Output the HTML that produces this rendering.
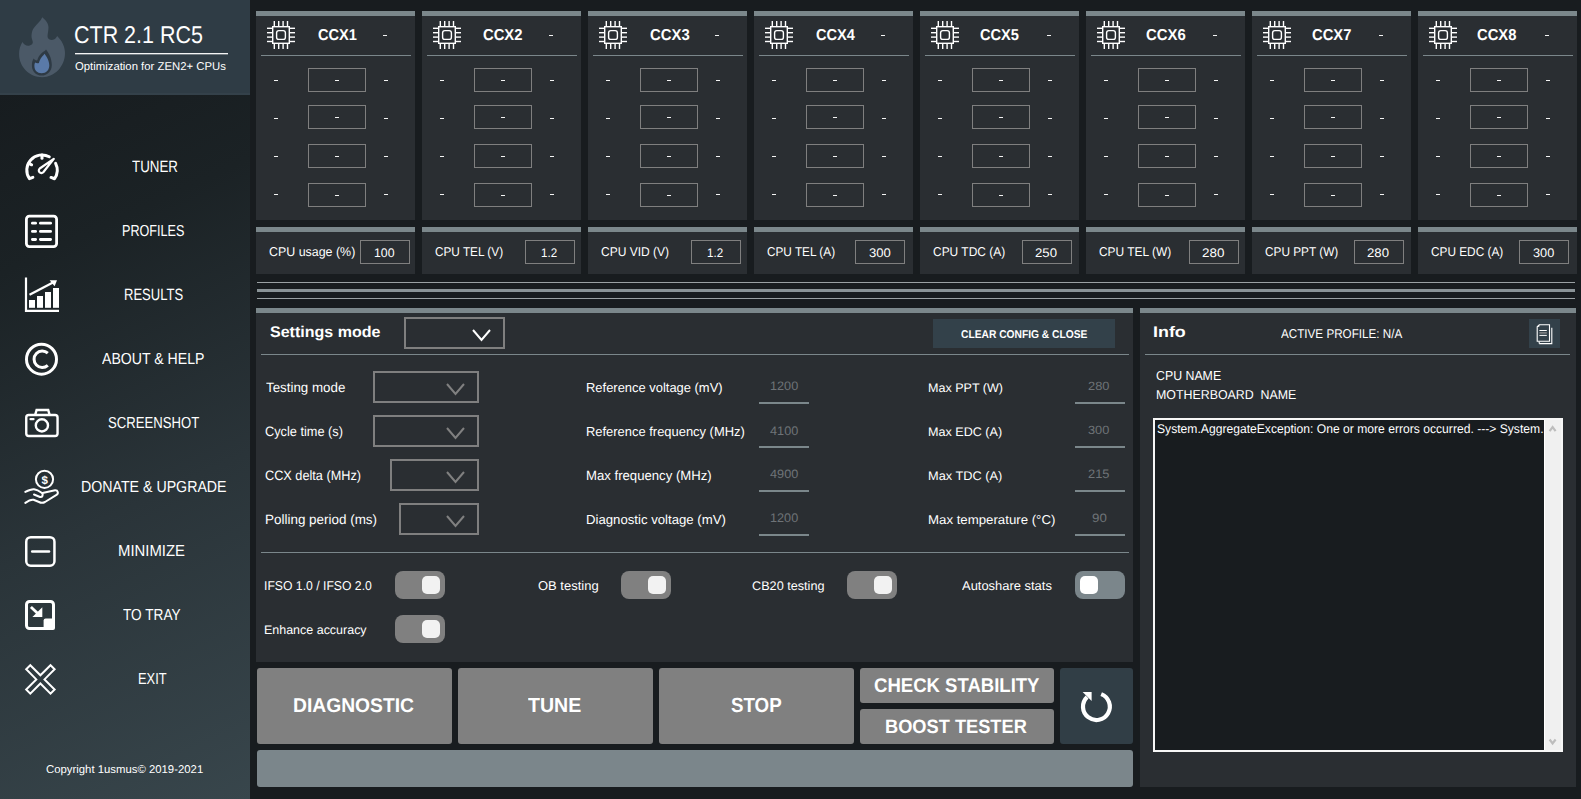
<!DOCTYPE html><html><head><meta charset="utf-8"><style>
*{margin:0;padding:0;box-sizing:border-box}
html,body{width:1581px;height:799px;overflow:hidden;background:#181c1f;font-family:"Liberation Sans",sans-serif;color:#fff;text-rendering:geometricPrecision}
.a{position:absolute}
.t{position:absolute;white-space:nowrap;line-height:1;transform-origin:0 0}
.pnl{position:absolute;background:#2a2e32}
.bar{position:absolute;background:#7b878b}
.box{position:absolute;border:1px solid #7f7f7f}
.dd{position:absolute;border:2px solid #7f7f7f}
.sep{position:absolute;height:1px;background:#7b878b}
.dash{position:absolute;width:4px;height:1px;background:#f4f4f4}
.ul{position:absolute;width:50px;height:2px;background:#7b878b}
.tog{position:absolute;width:50px;height:28px;border-radius:8px;background:#808080}
.knob{position:absolute;width:18px;height:18px;border-radius:5px;background:#f2f2f2}
.btn{position:absolute;background:#808080;border-radius:3px}
svg{position:absolute;overflow:visible}
</style></head><body>
<div class="a" style="left:0;top:0;width:250px;height:799px;background:linear-gradient(155deg,#15191c 0%,#1b2225 30%,#2a3439 62%,#38464c 100%)"></div>
<div class="a" style="left:0px;top:0px;width:250px;height:95px;background:#2f3c45;"></div>
<div class="a" style="left:0px;top:93px;width:250px;height:2px;background:#34414a;"></div>
<div class="t" style="left:73.93px;top:23.62px;font-size:24.20px;font-weight:400;color:#fff;transform:scaleX(0.8879)">CTR 2.1 RC5</div>
<div class="t" style="left:75.13px;top:61.53px;font-size:11.30px;font-weight:400;color:#fff;transform:scaleX(1.0030)">Optimization for ZEN2+ CPUs</div>
<div class="a" style="left:75px;top:53px;width:153px;height:1px;background:#f4f4f4;"></div>
<div class="a" style="left:75px;top:54px;width:153px;height:1px;background:rgba(240,240,240,0.35);"></div>
<div class="t" style="left:131.63px;top:158.57px;font-size:16.38px;font-weight:400;color:#fff;transform:scaleX(0.8148)">TUNER</div>
<div class="t" style="left:121.79px;top:223.57px;font-size:15.94px;font-weight:400;color:#fff;transform:scaleX(0.7912)">PROFILES</div>
<div class="t" style="left:124.36px;top:286.57px;font-size:16.38px;font-weight:400;color:#fff;transform:scaleX(0.7962)">RESULTS</div>
<div class="t" style="left:102.30px;top:351.57px;font-size:15.94px;font-weight:400;color:#fff;transform:scaleX(0.8848)">ABOUT &amp; HELP</div>
<div class="t" style="left:107.84px;top:415.62px;font-size:15.94px;font-weight:400;color:#fff;transform:scaleX(0.8236)">SCREENSHOT</div>
<div class="t" style="left:80.76px;top:479.57px;font-size:15.94px;font-weight:400;color:#fff;transform:scaleX(0.8902)">DONATE &amp; UPGRADE</div>
<div class="t" style="left:118.21px;top:543.57px;font-size:15.94px;font-weight:400;color:#fff;transform:scaleX(0.9337)">MINIMIZE</div>
<div class="t" style="left:123.33px;top:607.57px;font-size:15.94px;font-weight:400;color:#fff;transform:scaleX(0.8554)">TO TRAY</div>
<div class="t" style="left:137.67px;top:671.57px;font-size:15.94px;font-weight:400;color:#fff;transform:scaleX(0.8078)">EXIT</div>
<div class="t" style="left:46.13px;top:764.55px;font-size:11.30px;font-weight:400;color:#fff;transform:scaleX(1.0042)">Copyright 1usmus&copy; 2019-2021</div>
<svg style="left:0;top:0" width="250" height="799" viewBox="0 0 250 799"><path d="M42.3,17.3 C45,19.5 48.5,23 48.5,27.5 C48.5,31 47.3,34.5 47.6,37.1 C48,39.5 51.5,40.8 53.8,39.6 C55.5,38.7 56.5,37.2 57.1,35.9 C61.5,40 65,46 65,53 C65,66.5 54.5,77.2 42.3,77.2 C29.5,77.2 19.1,67 19.1,54 C19.1,49.5 20.3,45.5 22.4,42.1 C23.2,44 26,46.2 29,45.8 C32,45.2 33,43.5 32.8,42.1 C32.5,40 31.3,38 31.5,35.5 C31.7,32 32.5,29.8 34,27.7 C36.5,24.5 40.5,21.5 42.3,17.3 Z" fill="#4b5967"/><path d="M46,49.5 C48.5,52.5 51.8,58 51.8,65 C51.8,71 47.5,75.6 41.6,75.6 C36,75.6 31.9,71.5 31.9,65.5 C31.9,62.5 32.5,60.5 33.6,58.6 C34.5,60 35.8,60.6 37.3,60.3 C38.2,57 39.5,55 41.5,53.2 C43.5,51.5 45.2,50.8 46,49.5 Z" fill="#2e3a44"/><path d="M44.4,53.8 C46.5,56.5 49.3,60.5 49.3,65.5 C49.3,70 46.2,73.2 41.6,73.2 C37.3,73.2 34.4,70.3 34.4,66 C34.4,64.5 34.6,63.5 35.2,62.5 C36.2,63.2 37.5,63.4 38.9,63 C39.5,60.5 40.5,58.5 41.8,57 C43,55.8 44,55 44.4,53.8 Z" fill="#5a7aa8"/><g fill="none" stroke="#fff" stroke-width="3" stroke-linecap="round" stroke-linejoin="round"><path d="M32.86,177.39 L29.46,178.69 A15.2,15.2 0 0 1 49.25,156.74"/><path d="M55.61,163.34 A15.2,15.2 0 0 1 54.51,178.73 L51.01,177.43"/><line x1="42" y1="155" x2="42" y2="158.3"/><line x1="28.8" y1="163.4" x2="31.6" y2="164.8"/></g><path d="M53.8,158.8 L43.28,172.29 A2.6,2.6 0 1 1 39.72,168.51 Z" fill="none" stroke="#fff" stroke-width="2.2" stroke-linejoin="round"/><g fill="none" stroke="#fff" stroke-width="2.8" stroke-linecap="round"><rect x="26.4" y="216.2" width="30.2" height="30.4" rx="3"/><line x1="32.4" y1="223.2" x2="35.6" y2="223.2"/><line x1="40.4" y1="223.2" x2="50.6" y2="223.2"/><line x1="32.4" y1="231.4" x2="35.6" y2="231.4"/><line x1="40.4" y1="231.4" x2="50.6" y2="231.4"/><line x1="32.4" y1="239.5" x2="35.6" y2="239.5"/><line x1="40.4" y1="239.5" x2="50.6" y2="239.5"/></g><g fill="#fff"><path d="M26,277.6 V310.9 H59" fill="none" stroke="#fff" stroke-width="2.2"/><rect x="29" y="300" width="6" height="7.8"/><rect x="37" y="296" width="6" height="11.8"/><rect x="45" y="292" width="6" height="15.8"/><rect x="53" y="288" width="6" height="19.8"/><line x1="29.5" y1="294.8" x2="53" y2="282.6" stroke="#fff" stroke-width="2.3"/><polygon points="49.6,280.2 57,280.2 54.6,286.2"/></g><g fill="none" stroke="#fff" stroke-width="3"><circle cx="41.5" cy="359.2" r="15"/><path d="M47.8,353.2 A8.2,8.2 0 1 0 47.8,365.3"/></g><g fill="none" stroke="#fff" stroke-width="2.4" stroke-linecap="round"><rect x="26.25" y="415.05" width="31.3" height="20.9" rx="2.5"/><path d="M35.2,414.8 L36.6,410 H48.2 L49.6,414.8"/><circle cx="41.9" cy="425.4" r="6.1"/><line x1="30.6" y1="419.1" x2="33.4" y2="419.1"/></g><g fill="none" stroke="#fff" stroke-width="2" stroke-linecap="round" stroke-linejoin="round"><circle cx="44.5" cy="479.3" r="8.6"/><path d="M25.3,491.9 C28,490.5 31,489 34,489.2 C37,489.5 40,491.5 42,493 C43.5,494.5 42.5,497.5 40,497 L34,494.5"/><path d="M42.5,493 L55,490.3 C58,490 58.8,493.5 56.5,494.8 L45,502 C43,503 41,503 39,502 L33.5,499.8 C30.5,499.3 27.5,501.3 25.3,502.9"/></g><text x="44.6" y="483.6" font-family="Liberation Sans" font-weight="700" font-size="11.5" fill="#fff" text-anchor="middle">$</text><g fill="none" stroke="#fff" stroke-width="2.5" stroke-linecap="round"><rect x="26.25" y="537.15" width="28.2" height="28.5" rx="4.5"/><line x1="32.2" y1="551.4" x2="49" y2="551.4"/></g><g fill="#fff"><rect x="26.5" y="601.4" width="27" height="27.1" rx="3" fill="none" stroke="#fff" stroke-width="3"/><rect x="43.6" y="618.5" width="11.4" height="11.5" rx="2"/><line x1="30.9" y1="606.9" x2="38.6" y2="614.2" stroke="#fff" stroke-width="2.8"/><polygon points="32.4,617 42.3,617 42.3,607.2"/></g><polygon points="40.40,683.50 50.51,693.61 54.61,689.51 44.50,679.40 54.61,669.29 50.51,665.19 40.40,675.30 30.29,665.19 26.19,669.29 36.30,679.40 26.19,689.51 30.29,693.61" fill="none" stroke="#fff" stroke-width="2"/></svg>
<div class="a" style="left:256px;top:11px;width:159px;height:5px;background:#7b878b;"></div>
<div class="a" style="left:256px;top:16px;width:159px;height:204px;background:#2a2e32;"></div>
<div class="a" style="left:261px;top:55px;width:150px;height:1px;background:#7b878b;"></div>
<svg style="left:267px;top:21px" width="28" height="28" viewBox="0 0 28 28"><g stroke="#fff" stroke-width="1.4" fill="none"><line x1="7.3" y1="0" x2="7.3" y2="5.5"/><line x1="7.3" y1="22.5" x2="7.3" y2="28"/><line x1="0" y1="7.3" x2="5.5" y2="7.3"/><line x1="22.5" y1="7.3" x2="28" y2="7.3"/><line x1="11.7" y1="0" x2="11.7" y2="5.5"/><line x1="11.7" y1="22.5" x2="11.7" y2="28"/><line x1="0" y1="11.7" x2="5.5" y2="11.7"/><line x1="22.5" y1="11.7" x2="28" y2="11.7"/><line x1="16.1" y1="0" x2="16.1" y2="5.5"/><line x1="16.1" y1="22.5" x2="16.1" y2="28"/><line x1="0" y1="16.1" x2="5.5" y2="16.1"/><line x1="22.5" y1="16.1" x2="28" y2="16.1"/><line x1="20.5" y1="0" x2="20.5" y2="5.5"/><line x1="20.5" y1="22.5" x2="20.5" y2="28"/><line x1="0" y1="20.5" x2="5.5" y2="20.5"/><line x1="22.5" y1="20.5" x2="28" y2="20.5"/><rect x="5.7" y="5.7" width="16.6" height="16.6"/><rect x="9.6" y="9.6" width="8.8" height="8.8" rx="2.2"/></g></svg>
<div class="t" style="left:318.02px;top:27.58px;font-size:15.80px;font-weight:700;color:#fff;transform:scaleX(0.9228)">CCX1</div>
<div class="dash" style="left:383px;top:35px"></div>
<div class="box" style="left:308px;top:68px;width:58px;height:24px"></div>
<div class="dash" style="left:274px;top:80px"></div>
<div class="dash" style="left:335px;top:80px"></div>
<div class="dash" style="left:384px;top:80px"></div>
<div class="box" style="left:308px;top:105px;width:58px;height:24px"></div>
<div class="dash" style="left:274px;top:118px"></div>
<div class="dash" style="left:335px;top:117px"></div>
<div class="dash" style="left:384px;top:118px"></div>
<div class="box" style="left:308px;top:144px;width:58px;height:24px"></div>
<div class="dash" style="left:274px;top:156px"></div>
<div class="dash" style="left:335px;top:156px"></div>
<div class="dash" style="left:384px;top:156px"></div>
<div class="box" style="left:308px;top:183px;width:58px;height:24px"></div>
<div class="dash" style="left:274px;top:194px"></div>
<div class="dash" style="left:335px;top:195px"></div>
<div class="dash" style="left:384px;top:194px"></div>
<div class="a" style="left:422px;top:11px;width:159px;height:5px;background:#7b878b;"></div>
<div class="a" style="left:422px;top:16px;width:159px;height:204px;background:#2a2e32;"></div>
<div class="a" style="left:427px;top:55px;width:150px;height:1px;background:#7b878b;"></div>
<svg style="left:433px;top:21px" width="28" height="28" viewBox="0 0 28 28"><g stroke="#fff" stroke-width="1.4" fill="none"><line x1="7.3" y1="0" x2="7.3" y2="5.5"/><line x1="7.3" y1="22.5" x2="7.3" y2="28"/><line x1="0" y1="7.3" x2="5.5" y2="7.3"/><line x1="22.5" y1="7.3" x2="28" y2="7.3"/><line x1="11.7" y1="0" x2="11.7" y2="5.5"/><line x1="11.7" y1="22.5" x2="11.7" y2="28"/><line x1="0" y1="11.7" x2="5.5" y2="11.7"/><line x1="22.5" y1="11.7" x2="28" y2="11.7"/><line x1="16.1" y1="0" x2="16.1" y2="5.5"/><line x1="16.1" y1="22.5" x2="16.1" y2="28"/><line x1="0" y1="16.1" x2="5.5" y2="16.1"/><line x1="22.5" y1="16.1" x2="28" y2="16.1"/><line x1="20.5" y1="0" x2="20.5" y2="5.5"/><line x1="20.5" y1="22.5" x2="20.5" y2="28"/><line x1="0" y1="20.5" x2="5.5" y2="20.5"/><line x1="22.5" y1="20.5" x2="28" y2="20.5"/><rect x="5.7" y="5.7" width="16.6" height="16.6"/><rect x="9.6" y="9.6" width="8.8" height="8.8" rx="2.2"/></g></svg>
<div class="t" style="left:482.51px;top:27.58px;font-size:15.80px;font-weight:700;color:#fff;transform:scaleX(0.9361)">CCX2</div>
<div class="dash" style="left:549px;top:35px"></div>
<div class="box" style="left:474px;top:68px;width:58px;height:24px"></div>
<div class="dash" style="left:440px;top:80px"></div>
<div class="dash" style="left:501px;top:80px"></div>
<div class="dash" style="left:550px;top:80px"></div>
<div class="box" style="left:474px;top:105px;width:58px;height:24px"></div>
<div class="dash" style="left:440px;top:118px"></div>
<div class="dash" style="left:501px;top:117px"></div>
<div class="dash" style="left:550px;top:118px"></div>
<div class="box" style="left:474px;top:144px;width:58px;height:24px"></div>
<div class="dash" style="left:440px;top:156px"></div>
<div class="dash" style="left:501px;top:156px"></div>
<div class="dash" style="left:550px;top:156px"></div>
<div class="box" style="left:474px;top:183px;width:58px;height:24px"></div>
<div class="dash" style="left:440px;top:194px"></div>
<div class="dash" style="left:501px;top:195px"></div>
<div class="dash" style="left:550px;top:194px"></div>
<div class="a" style="left:588px;top:11px;width:159px;height:5px;background:#7b878b;"></div>
<div class="a" style="left:588px;top:16px;width:159px;height:204px;background:#2a2e32;"></div>
<div class="a" style="left:593px;top:55px;width:150px;height:1px;background:#7b878b;"></div>
<svg style="left:599px;top:21px" width="28" height="28" viewBox="0 0 28 28"><g stroke="#fff" stroke-width="1.4" fill="none"><line x1="7.3" y1="0" x2="7.3" y2="5.5"/><line x1="7.3" y1="22.5" x2="7.3" y2="28"/><line x1="0" y1="7.3" x2="5.5" y2="7.3"/><line x1="22.5" y1="7.3" x2="28" y2="7.3"/><line x1="11.7" y1="0" x2="11.7" y2="5.5"/><line x1="11.7" y1="22.5" x2="11.7" y2="28"/><line x1="0" y1="11.7" x2="5.5" y2="11.7"/><line x1="22.5" y1="11.7" x2="28" y2="11.7"/><line x1="16.1" y1="0" x2="16.1" y2="5.5"/><line x1="16.1" y1="22.5" x2="16.1" y2="28"/><line x1="0" y1="16.1" x2="5.5" y2="16.1"/><line x1="22.5" y1="16.1" x2="28" y2="16.1"/><line x1="20.5" y1="0" x2="20.5" y2="5.5"/><line x1="20.5" y1="22.5" x2="20.5" y2="28"/><line x1="0" y1="20.5" x2="5.5" y2="20.5"/><line x1="22.5" y1="20.5" x2="28" y2="20.5"/><rect x="5.7" y="5.7" width="16.6" height="16.6"/><rect x="9.6" y="9.6" width="8.8" height="8.8" rx="2.2"/></g></svg>
<div class="t" style="left:649.61px;top:27.58px;font-size:15.80px;font-weight:700;color:#fff;transform:scaleX(0.9410)">CCX3</div>
<div class="dash" style="left:715px;top:35px"></div>
<div class="box" style="left:640px;top:68px;width:58px;height:24px"></div>
<div class="dash" style="left:606px;top:80px"></div>
<div class="dash" style="left:667px;top:80px"></div>
<div class="dash" style="left:716px;top:80px"></div>
<div class="box" style="left:640px;top:105px;width:58px;height:24px"></div>
<div class="dash" style="left:606px;top:118px"></div>
<div class="dash" style="left:667px;top:117px"></div>
<div class="dash" style="left:716px;top:118px"></div>
<div class="box" style="left:640px;top:144px;width:58px;height:24px"></div>
<div class="dash" style="left:606px;top:156px"></div>
<div class="dash" style="left:667px;top:156px"></div>
<div class="dash" style="left:716px;top:156px"></div>
<div class="box" style="left:640px;top:183px;width:58px;height:24px"></div>
<div class="dash" style="left:606px;top:194px"></div>
<div class="dash" style="left:667px;top:195px"></div>
<div class="dash" style="left:716px;top:194px"></div>
<div class="a" style="left:754px;top:11px;width:159px;height:5px;background:#7b878b;"></div>
<div class="a" style="left:754px;top:16px;width:159px;height:204px;background:#2a2e32;"></div>
<div class="a" style="left:759px;top:55px;width:150px;height:1px;background:#7b878b;"></div>
<svg style="left:765px;top:21px" width="28" height="28" viewBox="0 0 28 28"><g stroke="#fff" stroke-width="1.4" fill="none"><line x1="7.3" y1="0" x2="7.3" y2="5.5"/><line x1="7.3" y1="22.5" x2="7.3" y2="28"/><line x1="0" y1="7.3" x2="5.5" y2="7.3"/><line x1="22.5" y1="7.3" x2="28" y2="7.3"/><line x1="11.7" y1="0" x2="11.7" y2="5.5"/><line x1="11.7" y1="22.5" x2="11.7" y2="28"/><line x1="0" y1="11.7" x2="5.5" y2="11.7"/><line x1="22.5" y1="11.7" x2="28" y2="11.7"/><line x1="16.1" y1="0" x2="16.1" y2="5.5"/><line x1="16.1" y1="22.5" x2="16.1" y2="28"/><line x1="0" y1="16.1" x2="5.5" y2="16.1"/><line x1="22.5" y1="16.1" x2="28" y2="16.1"/><line x1="20.5" y1="0" x2="20.5" y2="5.5"/><line x1="20.5" y1="22.5" x2="20.5" y2="28"/><line x1="0" y1="20.5" x2="5.5" y2="20.5"/><line x1="22.5" y1="20.5" x2="28" y2="20.5"/><rect x="5.7" y="5.7" width="16.6" height="16.6"/><rect x="9.6" y="9.6" width="8.8" height="8.8" rx="2.2"/></g></svg>
<div class="t" style="left:815.92px;top:27.58px;font-size:15.80px;font-weight:700;color:#fff;transform:scaleX(0.9230)">CCX4</div>
<div class="dash" style="left:881px;top:35px"></div>
<div class="box" style="left:806px;top:68px;width:58px;height:24px"></div>
<div class="dash" style="left:772px;top:80px"></div>
<div class="dash" style="left:833px;top:80px"></div>
<div class="dash" style="left:882px;top:80px"></div>
<div class="box" style="left:806px;top:105px;width:58px;height:24px"></div>
<div class="dash" style="left:772px;top:118px"></div>
<div class="dash" style="left:833px;top:117px"></div>
<div class="dash" style="left:882px;top:118px"></div>
<div class="box" style="left:806px;top:144px;width:58px;height:24px"></div>
<div class="dash" style="left:772px;top:156px"></div>
<div class="dash" style="left:833px;top:156px"></div>
<div class="dash" style="left:882px;top:156px"></div>
<div class="box" style="left:806px;top:183px;width:58px;height:24px"></div>
<div class="dash" style="left:772px;top:194px"></div>
<div class="dash" style="left:833px;top:195px"></div>
<div class="dash" style="left:882px;top:194px"></div>
<div class="a" style="left:920px;top:11px;width:159px;height:5px;background:#7b878b;"></div>
<div class="a" style="left:920px;top:16px;width:159px;height:204px;background:#2a2e32;"></div>
<div class="a" style="left:925px;top:55px;width:150px;height:1px;background:#7b878b;"></div>
<svg style="left:931px;top:21px" width="28" height="28" viewBox="0 0 28 28"><g stroke="#fff" stroke-width="1.4" fill="none"><line x1="7.3" y1="0" x2="7.3" y2="5.5"/><line x1="7.3" y1="22.5" x2="7.3" y2="28"/><line x1="0" y1="7.3" x2="5.5" y2="7.3"/><line x1="22.5" y1="7.3" x2="28" y2="7.3"/><line x1="11.7" y1="0" x2="11.7" y2="5.5"/><line x1="11.7" y1="22.5" x2="11.7" y2="28"/><line x1="0" y1="11.7" x2="5.5" y2="11.7"/><line x1="22.5" y1="11.7" x2="28" y2="11.7"/><line x1="16.1" y1="0" x2="16.1" y2="5.5"/><line x1="16.1" y1="22.5" x2="16.1" y2="28"/><line x1="0" y1="16.1" x2="5.5" y2="16.1"/><line x1="22.5" y1="16.1" x2="28" y2="16.1"/><line x1="20.5" y1="0" x2="20.5" y2="5.5"/><line x1="20.5" y1="22.5" x2="20.5" y2="28"/><line x1="0" y1="20.5" x2="5.5" y2="20.5"/><line x1="22.5" y1="20.5" x2="28" y2="20.5"/><rect x="5.7" y="5.7" width="16.6" height="16.6"/><rect x="9.6" y="9.6" width="8.8" height="8.8" rx="2.2"/></g></svg>
<div class="t" style="left:979.82px;top:27.58px;font-size:15.80px;font-weight:700;color:#fff;transform:scaleX(0.9252)">CCX5</div>
<div class="dash" style="left:1047px;top:35px"></div>
<div class="box" style="left:972px;top:68px;width:58px;height:24px"></div>
<div class="dash" style="left:938px;top:80px"></div>
<div class="dash" style="left:999px;top:80px"></div>
<div class="dash" style="left:1048px;top:80px"></div>
<div class="box" style="left:972px;top:105px;width:58px;height:24px"></div>
<div class="dash" style="left:938px;top:118px"></div>
<div class="dash" style="left:999px;top:117px"></div>
<div class="dash" style="left:1048px;top:118px"></div>
<div class="box" style="left:972px;top:144px;width:58px;height:24px"></div>
<div class="dash" style="left:938px;top:156px"></div>
<div class="dash" style="left:999px;top:156px"></div>
<div class="dash" style="left:1048px;top:156px"></div>
<div class="box" style="left:972px;top:183px;width:58px;height:24px"></div>
<div class="dash" style="left:938px;top:194px"></div>
<div class="dash" style="left:999px;top:195px"></div>
<div class="dash" style="left:1048px;top:194px"></div>
<div class="a" style="left:1086px;top:11px;width:159px;height:5px;background:#7b878b;"></div>
<div class="a" style="left:1086px;top:16px;width:159px;height:204px;background:#2a2e32;"></div>
<div class="a" style="left:1091px;top:55px;width:150px;height:1px;background:#7b878b;"></div>
<svg style="left:1097px;top:21px" width="28" height="28" viewBox="0 0 28 28"><g stroke="#fff" stroke-width="1.4" fill="none"><line x1="7.3" y1="0" x2="7.3" y2="5.5"/><line x1="7.3" y1="22.5" x2="7.3" y2="28"/><line x1="0" y1="7.3" x2="5.5" y2="7.3"/><line x1="22.5" y1="7.3" x2="28" y2="7.3"/><line x1="11.7" y1="0" x2="11.7" y2="5.5"/><line x1="11.7" y1="22.5" x2="11.7" y2="28"/><line x1="0" y1="11.7" x2="5.5" y2="11.7"/><line x1="22.5" y1="11.7" x2="28" y2="11.7"/><line x1="16.1" y1="0" x2="16.1" y2="5.5"/><line x1="16.1" y1="22.5" x2="16.1" y2="28"/><line x1="0" y1="16.1" x2="5.5" y2="16.1"/><line x1="22.5" y1="16.1" x2="28" y2="16.1"/><line x1="20.5" y1="0" x2="20.5" y2="5.5"/><line x1="20.5" y1="22.5" x2="20.5" y2="28"/><line x1="0" y1="20.5" x2="5.5" y2="20.5"/><line x1="22.5" y1="20.5" x2="28" y2="20.5"/><rect x="5.7" y="5.7" width="16.6" height="16.6"/><rect x="9.6" y="9.6" width="8.8" height="8.8" rx="2.2"/></g></svg>
<div class="t" style="left:1145.91px;top:27.58px;font-size:15.80px;font-weight:700;color:#fff;transform:scaleX(0.9410)">CCX6</div>
<div class="dash" style="left:1213px;top:35px"></div>
<div class="box" style="left:1138px;top:68px;width:58px;height:24px"></div>
<div class="dash" style="left:1104px;top:80px"></div>
<div class="dash" style="left:1165px;top:80px"></div>
<div class="dash" style="left:1214px;top:80px"></div>
<div class="box" style="left:1138px;top:105px;width:58px;height:24px"></div>
<div class="dash" style="left:1104px;top:118px"></div>
<div class="dash" style="left:1165px;top:117px"></div>
<div class="dash" style="left:1214px;top:118px"></div>
<div class="box" style="left:1138px;top:144px;width:58px;height:24px"></div>
<div class="dash" style="left:1104px;top:156px"></div>
<div class="dash" style="left:1165px;top:156px"></div>
<div class="dash" style="left:1214px;top:156px"></div>
<div class="box" style="left:1138px;top:183px;width:58px;height:24px"></div>
<div class="dash" style="left:1104px;top:194px"></div>
<div class="dash" style="left:1165px;top:195px"></div>
<div class="dash" style="left:1214px;top:194px"></div>
<div class="a" style="left:1252px;top:11px;width:159px;height:5px;background:#7b878b;"></div>
<div class="a" style="left:1252px;top:16px;width:159px;height:204px;background:#2a2e32;"></div>
<div class="a" style="left:1257px;top:55px;width:150px;height:1px;background:#7b878b;"></div>
<svg style="left:1263px;top:21px" width="28" height="28" viewBox="0 0 28 28"><g stroke="#fff" stroke-width="1.4" fill="none"><line x1="7.3" y1="0" x2="7.3" y2="5.5"/><line x1="7.3" y1="22.5" x2="7.3" y2="28"/><line x1="0" y1="7.3" x2="5.5" y2="7.3"/><line x1="22.5" y1="7.3" x2="28" y2="7.3"/><line x1="11.7" y1="0" x2="11.7" y2="5.5"/><line x1="11.7" y1="22.5" x2="11.7" y2="28"/><line x1="0" y1="11.7" x2="5.5" y2="11.7"/><line x1="22.5" y1="11.7" x2="28" y2="11.7"/><line x1="16.1" y1="0" x2="16.1" y2="5.5"/><line x1="16.1" y1="22.5" x2="16.1" y2="28"/><line x1="0" y1="16.1" x2="5.5" y2="16.1"/><line x1="22.5" y1="16.1" x2="28" y2="16.1"/><line x1="20.5" y1="0" x2="20.5" y2="5.5"/><line x1="20.5" y1="22.5" x2="20.5" y2="28"/><line x1="0" y1="20.5" x2="5.5" y2="20.5"/><line x1="22.5" y1="20.5" x2="28" y2="20.5"/><rect x="5.7" y="5.7" width="16.6" height="16.6"/><rect x="9.6" y="9.6" width="8.8" height="8.8" rx="2.2"/></g></svg>
<div class="t" style="left:1311.91px;top:27.58px;font-size:15.80px;font-weight:700;color:#fff;transform:scaleX(0.9337)">CCX7</div>
<div class="dash" style="left:1379px;top:35px"></div>
<div class="box" style="left:1304px;top:68px;width:58px;height:24px"></div>
<div class="dash" style="left:1270px;top:80px"></div>
<div class="dash" style="left:1331px;top:80px"></div>
<div class="dash" style="left:1380px;top:80px"></div>
<div class="box" style="left:1304px;top:105px;width:58px;height:24px"></div>
<div class="dash" style="left:1270px;top:118px"></div>
<div class="dash" style="left:1331px;top:117px"></div>
<div class="dash" style="left:1380px;top:118px"></div>
<div class="box" style="left:1304px;top:144px;width:58px;height:24px"></div>
<div class="dash" style="left:1270px;top:156px"></div>
<div class="dash" style="left:1331px;top:156px"></div>
<div class="dash" style="left:1380px;top:156px"></div>
<div class="box" style="left:1304px;top:183px;width:58px;height:24px"></div>
<div class="dash" style="left:1270px;top:194px"></div>
<div class="dash" style="left:1331px;top:195px"></div>
<div class="dash" style="left:1380px;top:194px"></div>
<div class="a" style="left:1418px;top:11px;width:159px;height:5px;background:#7b878b;"></div>
<div class="a" style="left:1418px;top:16px;width:159px;height:204px;background:#2a2e32;"></div>
<div class="a" style="left:1423px;top:55px;width:150px;height:1px;background:#7b878b;"></div>
<svg style="left:1429px;top:21px" width="28" height="28" viewBox="0 0 28 28"><g stroke="#fff" stroke-width="1.4" fill="none"><line x1="7.3" y1="0" x2="7.3" y2="5.5"/><line x1="7.3" y1="22.5" x2="7.3" y2="28"/><line x1="0" y1="7.3" x2="5.5" y2="7.3"/><line x1="22.5" y1="7.3" x2="28" y2="7.3"/><line x1="11.7" y1="0" x2="11.7" y2="5.5"/><line x1="11.7" y1="22.5" x2="11.7" y2="28"/><line x1="0" y1="11.7" x2="5.5" y2="11.7"/><line x1="22.5" y1="11.7" x2="28" y2="11.7"/><line x1="16.1" y1="0" x2="16.1" y2="5.5"/><line x1="16.1" y1="22.5" x2="16.1" y2="28"/><line x1="0" y1="16.1" x2="5.5" y2="16.1"/><line x1="22.5" y1="16.1" x2="28" y2="16.1"/><line x1="20.5" y1="0" x2="20.5" y2="5.5"/><line x1="20.5" y1="22.5" x2="20.5" y2="28"/><line x1="0" y1="20.5" x2="5.5" y2="20.5"/><line x1="22.5" y1="20.5" x2="28" y2="20.5"/><rect x="5.7" y="5.7" width="16.6" height="16.6"/><rect x="9.6" y="9.6" width="8.8" height="8.8" rx="2.2"/></g></svg>
<div class="t" style="left:1476.71px;top:27.58px;font-size:15.80px;font-weight:700;color:#fff;transform:scaleX(0.9349)">CCX8</div>
<div class="dash" style="left:1545px;top:35px"></div>
<div class="box" style="left:1470px;top:68px;width:58px;height:24px"></div>
<div class="dash" style="left:1436px;top:80px"></div>
<div class="dash" style="left:1497px;top:80px"></div>
<div class="dash" style="left:1546px;top:80px"></div>
<div class="box" style="left:1470px;top:105px;width:58px;height:24px"></div>
<div class="dash" style="left:1436px;top:118px"></div>
<div class="dash" style="left:1497px;top:117px"></div>
<div class="dash" style="left:1546px;top:118px"></div>
<div class="box" style="left:1470px;top:144px;width:58px;height:24px"></div>
<div class="dash" style="left:1436px;top:156px"></div>
<div class="dash" style="left:1497px;top:156px"></div>
<div class="dash" style="left:1546px;top:156px"></div>
<div class="box" style="left:1470px;top:183px;width:58px;height:24px"></div>
<div class="dash" style="left:1436px;top:194px"></div>
<div class="dash" style="left:1497px;top:195px"></div>
<div class="dash" style="left:1546px;top:194px"></div>
<div class="a" style="left:256px;top:227px;width:159px;height:5px;background:#7b878b;"></div>
<div class="a" style="left:256px;top:232px;width:159px;height:42px;background:#2a2e32;"></div>
<div class="box" style="left:360px;top:240px;width:50px;height:24px"></div>
<div class="t" style="left:268.98px;top:245.57px;font-size:12.75px;font-weight:400;color:#fff;transform:scaleX(0.9744)">CPU usage (%)</div>
<div class="t" style="left:374.04px;top:246.62px;font-size:12.46px;font-weight:400;color:#fff;transform:scaleX(0.9875)">100</div>
<div class="a" style="left:422px;top:227px;width:159px;height:5px;background:#7b878b;"></div>
<div class="a" style="left:422px;top:232px;width:159px;height:42px;background:#2a2e32;"></div>
<div class="box" style="left:525px;top:240px;width:50px;height:24px"></div>
<div class="t" style="left:435.01px;top:245.57px;font-size:12.75px;font-weight:400;color:#fff;transform:scaleX(0.9238)">CPU TEL (V)</div>
<div class="t" style="left:541.09px;top:246.62px;font-size:12.46px;font-weight:400;color:#fff;transform:scaleX(0.9287)">1.2</div>
<div class="a" style="left:588px;top:227px;width:159px;height:5px;background:#7b878b;"></div>
<div class="a" style="left:588px;top:232px;width:159px;height:42px;background:#2a2e32;"></div>
<div class="box" style="left:691px;top:240px;width:50px;height:24px"></div>
<div class="t" style="left:601.00px;top:245.57px;font-size:12.75px;font-weight:400;color:#fff;transform:scaleX(0.9420)">CPU VID (V)</div>
<div class="t" style="left:707.09px;top:246.62px;font-size:12.46px;font-weight:400;color:#fff;transform:scaleX(0.9287)">1.2</div>
<div class="a" style="left:754px;top:227px;width:159px;height:5px;background:#7b878b;"></div>
<div class="a" style="left:754px;top:232px;width:159px;height:42px;background:#2a2e32;"></div>
<div class="box" style="left:855px;top:240px;width:50px;height:24px"></div>
<div class="t" style="left:767.01px;top:245.57px;font-size:12.75px;font-weight:400;color:#fff;transform:scaleX(0.9238)">CPU TEL (A)</div>
<div class="t" style="left:868.78px;top:246.62px;font-size:12.46px;font-weight:400;color:#fff;transform:scaleX(1.0496)">300</div>
<div class="a" style="left:920px;top:227px;width:159px;height:5px;background:#7b878b;"></div>
<div class="a" style="left:920px;top:232px;width:159px;height:42px;background:#2a2e32;"></div>
<div class="box" style="left:1022px;top:240px;width:50px;height:24px"></div>
<div class="t" style="left:933.00px;top:245.57px;font-size:12.75px;font-weight:400;color:#fff;transform:scaleX(0.9375)">CPU TDC (A)</div>
<div class="t" style="left:1035.14px;top:246.62px;font-size:12.46px;font-weight:400;color:#fff;transform:scaleX(1.0562)">250</div>
<div class="a" style="left:1086px;top:227px;width:159px;height:5px;background:#7b878b;"></div>
<div class="a" style="left:1086px;top:232px;width:159px;height:42px;background:#2a2e32;"></div>
<div class="box" style="left:1189px;top:240px;width:50px;height:24px"></div>
<div class="t" style="left:1099.00px;top:245.57px;font-size:12.75px;font-weight:400;color:#fff;transform:scaleX(0.9359)">CPU TEL (W)</div>
<div class="t" style="left:1202.23px;top:246.62px;font-size:12.46px;font-weight:400;color:#fff;transform:scaleX(1.0765)">280</div>
<div class="a" style="left:1252px;top:227px;width:159px;height:5px;background:#7b878b;"></div>
<div class="a" style="left:1252px;top:232px;width:159px;height:42px;background:#2a2e32;"></div>
<div class="box" style="left:1354px;top:240px;width:50px;height:24px"></div>
<div class="t" style="left:1265.01px;top:245.57px;font-size:12.75px;font-weight:400;color:#fff;transform:scaleX(0.9257)">CPU PPT (W)</div>
<div class="t" style="left:1367.14px;top:246.62px;font-size:12.46px;font-weight:400;color:#fff;transform:scaleX(1.0562)">280</div>
<div class="a" style="left:1418px;top:227px;width:159px;height:5px;background:#7b878b;"></div>
<div class="a" style="left:1418px;top:232px;width:159px;height:42px;background:#2a2e32;"></div>
<div class="box" style="left:1519px;top:240px;width:50px;height:24px"></div>
<div class="t" style="left:1431.01px;top:245.57px;font-size:12.75px;font-weight:400;color:#fff;transform:scaleX(0.9265)">CPU EDC (A)</div>
<div class="t" style="left:1532.79px;top:246.62px;font-size:12.46px;font-weight:400;color:#fff;transform:scaleX(1.0244)">300</div>
<div class="a" style="left:257px;top:282px;width:1318px;height:1px;background:#9aa0a3;"></div>
<div class="a" style="left:257px;top:289px;width:1318px;height:3px;background:#8a9397;"></div>
<div class="a" style="left:257px;top:298px;width:1318px;height:1px;background:#9aa0a3;"></div>
<div class="a" style="left:256px;top:308px;width:877px;height:5px;background:#7b878b;"></div>
<div class="a" style="left:256px;top:313px;width:877px;height:349px;background:#2a2e32;"></div>
<div class="a" style="left:261px;top:354px;width:868px;height:1px;background:#7b878b;"></div>
<div class="a" style="left:261px;top:552px;width:868px;height:1px;background:#7b878b;"></div>
<div class="t" style="left:270.02px;top:324.60px;font-size:15.51px;font-weight:700;color:#fff;transform:scaleX(1.0339)">Settings mode</div>
<div class="dd" style="left:404px;top:317px;width:101px;height:32px"></div>
<svg style="left:473px;top:330px" width="17" height="10"><polyline points="0,0 8.5,10 17,0" fill="none" stroke="#fff" stroke-width="2"/></svg>
<div class="a" style="left:933px;top:319px;width:182px;height:29px;background:#33414a;"></div>
<div class="t" style="left:960.99px;top:329.62px;font-size:11.30px;font-weight:700;color:#fff;transform:scaleX(0.9070)">CLEAR CONFIG &amp; CLOSE</div>
<div class="dd" style="left:373px;top:371px;width:106px;height:32px"></div>
<svg style="left:447px;top:384px" width="17" height="10"><polyline points="0,0 8.5,10 17,0" fill="none" stroke="#808080" stroke-width="2"/></svg>
<div class="t" style="left:265.73px;top:380.55px;font-size:13.62px;font-weight:400;color:#fff;transform:scaleX(0.9796)">Testing mode</div>
<div class="dd" style="left:373px;top:415px;width:106px;height:32px"></div>
<svg style="left:447px;top:428px" width="17" height="10"><polyline points="0,0 8.5,10 17,0" fill="none" stroke="#808080" stroke-width="2"/></svg>
<div class="t" style="left:264.96px;top:424.51px;font-size:13.62px;font-weight:400;color:#fff;transform:scaleX(0.9371)">Cycle time (s)</div>
<div class="dd" style="left:390px;top:459px;width:89px;height:32px"></div>
<svg style="left:447px;top:472px" width="17" height="10"><polyline points="0,0 8.5,10 17,0" fill="none" stroke="#808080" stroke-width="2"/></svg>
<div class="t" style="left:264.96px;top:468.58px;font-size:13.62px;font-weight:400;color:#fff;transform:scaleX(0.9333)">CCX delta (MHz)</div>
<div class="dd" style="left:399px;top:503px;width:80px;height:32px"></div>
<svg style="left:447px;top:516px" width="17" height="10"><polyline points="0,0 8.5,10 17,0" fill="none" stroke="#808080" stroke-width="2"/></svg>
<div class="t" style="left:264.52px;top:512.52px;font-size:13.62px;font-weight:400;color:#fff;transform:scaleX(0.9877)">Polling period (ms)</div>
<div class="t" style="left:585.56px;top:380.59px;font-size:13.04px;font-weight:400;color:#fff;transform:scaleX(0.9925)">Reference voltage (mV)</div>
<div class="t" style="left:769.61px;top:379.55px;font-size:12.32px;font-weight:400;color:#6e7377;transform:scaleX(1.0300)">1200</div>
<div class="a" style="left:759px;top:402px;width:50px;height:2px;background:#7b878b;"></div>
<div class="t" style="left:928.30px;top:381.57px;font-size:12.46px;font-weight:400;color:#fff;transform:scaleX(1.0070)">Max PPT (W)</div>
<div class="t" style="left:1088.36px;top:380.55px;font-size:11.88px;font-weight:400;color:#6e7377;transform:scaleX(1.0811)">280</div>
<div class="a" style="left:1075px;top:402px;width:50px;height:2px;background:#7b878b;"></div>
<div class="t" style="left:585.56px;top:424.59px;font-size:13.04px;font-weight:400;color:#fff;transform:scaleX(0.9921)">Reference frequency (MHz)</div>
<div class="t" style="left:769.55px;top:424.62px;font-size:12.46px;font-weight:400;color:#6e7377;transform:scaleX(1.0205)">4100</div>
<div class="a" style="left:759px;top:446px;width:50px;height:2px;background:#7b878b;"></div>
<div class="t" style="left:928.29px;top:425.55px;font-size:12.46px;font-weight:400;color:#fff;transform:scaleX(1.0102)">Max EDC (A)</div>
<div class="t" style="left:1088.49px;top:424.54px;font-size:11.96px;font-weight:400;color:#6e7377;transform:scaleX(1.0678)">300</div>
<div class="a" style="left:1075px;top:446px;width:50px;height:2px;background:#7b878b;"></div>
<div class="t" style="left:585.55px;top:468.55px;font-size:13.33px;font-weight:400;color:#fff;transform:scaleX(0.9865)">Max frequency (MHz)</div>
<div class="t" style="left:769.55px;top:467.58px;font-size:12.17px;font-weight:400;color:#6e7377;transform:scaleX(1.0448)">4900</div>
<div class="a" style="left:759px;top:490px;width:50px;height:2px;background:#7b878b;"></div>
<div class="t" style="left:928.28px;top:469.62px;font-size:12.46px;font-weight:400;color:#fff;transform:scaleX(1.0245)">Max TDC (A)</div>
<div class="t" style="left:1088.36px;top:467.55px;font-size:12.32px;font-weight:400;color:#6e7377;transform:scaleX(1.0430)">215</div>
<div class="a" style="left:1075px;top:490px;width:50px;height:2px;background:#7b878b;"></div>
<div class="t" style="left:585.54px;top:512.54px;font-size:13.04px;font-weight:400;color:#fff;transform:scaleX(1.0112)">Diagnostic voltage (mV)</div>
<div class="t" style="left:769.61px;top:511.52px;font-size:12.46px;font-weight:400;color:#6e7377;transform:scaleX(1.0180)">1200</div>
<div class="a" style="left:759px;top:534px;width:50px;height:2px;background:#7b878b;"></div>
<div class="t" style="left:928.24px;top:513.52px;font-size:12.75px;font-weight:400;color:#fff;transform:scaleX(1.0380)">Max temperature (&deg;C)</div>
<div class="t" style="left:1092.03px;top:511.50px;font-size:12.17px;font-weight:400;color:#6e7377;transform:scaleX(1.0952)">90</div>
<div class="a" style="left:1075px;top:534px;width:50px;height:2px;background:#7b878b;"></div>
<div class="tog" style="left:395px;top:571px;background:#808080"></div>
<div class="knob" style="left:422px;top:576px;background:#f2f2f2"></div>
<div class="tog" style="left:621px;top:571px;background:#808080"></div>
<div class="knob" style="left:648px;top:576px;background:#f2f2f2"></div>
<div class="tog" style="left:847px;top:571px;background:#808080"></div>
<div class="knob" style="left:874px;top:576px;background:#f2f2f2"></div>
<div class="tog" style="left:1075px;top:571px;background:#7b868b"></div>
<div class="knob" style="left:1080px;top:576px;background:#fff"></div>
<div class="tog" style="left:395px;top:615px;background:#808080"></div>
<div class="knob" style="left:422px;top:620px;background:#f2f2f2"></div>
<div class="t" style="left:263.90px;top:579.60px;font-size:12.75px;font-weight:400;color:#fff;transform:scaleX(0.9569)">IFSO 1.0 / IFSO 2.0</div>
<div class="t" style="left:538.05px;top:579.60px;font-size:12.75px;font-weight:400;color:#fff;transform:scaleX(1.0185)">OB testing</div>
<div class="t" style="left:751.97px;top:579.62px;font-size:12.46px;font-weight:400;color:#fff;transform:scaleX(1.0169)">CB20 testing</div>
<div class="t" style="left:962.40px;top:579.52px;font-size:12.75px;font-weight:400;color:#fff;transform:scaleX(1.0144)">Autoshare stats</div>
<div class="t" style="left:264.30px;top:623.60px;font-size:12.46px;font-weight:400;color:#fff;transform:scaleX(1.0014)">Enhance accuracy</div>
<div class="btn" style="left:257px;top:668px;width:195px;height:76px"></div>
<div class="btn" style="left:458px;top:668px;width:195px;height:76px"></div>
<div class="btn" style="left:659px;top:668px;width:195px;height:76px"></div>
<div class="btn" style="left:860px;top:668px;width:194px;height:35px"></div>
<div class="btn" style="left:860px;top:709px;width:194px;height:35px"></div>
<div class="btn" style="left:1060px;top:668px;width:73px;height:76px;background:#313e46"></div>
<div class="t" style="left:292.95px;top:696.59px;font-size:19.86px;font-weight:700;color:#fff;transform:scaleX(0.9706)">DIAGNOSTIC</div>
<div class="t" style="left:528.30px;top:695.53px;font-size:20.43px;font-weight:700;color:#fff;transform:scaleX(0.9576)">TUNE</div>
<div class="t" style="left:731.14px;top:695.53px;font-size:20.43px;font-weight:700;color:#fff;transform:scaleX(0.9176)">STOP</div>
<div class="t" style="left:873.86px;top:676.62px;font-size:19.86px;font-weight:700;color:#fff;transform:scaleX(0.9335)">CHECK STABILITY</div>
<div class="t" style="left:885.12px;top:717.60px;font-size:19.42px;font-weight:700;color:#fff;transform:scaleX(0.9395)">BOOST TESTER</div>
<div class="btn" style="left:257px;top:750px;width:876px;height:37px;background:#7b868b"></div>
<div class="a" style="left:1140px;top:308px;width:436px;height:5px;background:#7b878b;"></div>
<div class="a" style="left:1140px;top:313px;width:436px;height:474px;background:#2a2e32;"></div>
<div class="a" style="left:1145px;top:354px;width:425px;height:1px;background:#7b878b;"></div>
<div class="t" style="left:1152.65px;top:324.51px;font-size:15.36px;font-weight:700;color:#fff;transform:scaleX(1.1645)">Info</div>
<div class="t" style="left:1280.50px;top:327.52px;font-size:12.75px;font-weight:400;color:#fff;transform:scaleX(0.9154)">ACTIVE PROFILE: N/A</div>
<div class="t" style="left:1155.98px;top:368.59px;font-size:13.04px;font-weight:400;color:#fff;transform:scaleX(0.9469)">CPU NAME</div>
<div class="t" style="left:1155.61px;top:388.55px;font-size:12.90px;font-weight:400;color:#fff;transform:scaleX(0.9606)">MOTHERBOARD&nbsp; NAME</div>
<div class="a" style="left:1529px;top:319px;width:31px;height:29px;background:#33414a;"></div>
<div class="a" style="left:1153px;top:418px;width:410px;height:334px;border:2px solid #f6f6f6;background:#181c1f"></div>
<div class="a" style="left:1544px;top:420px;width:1px;height:330px;background:#ffffff;"></div>
<div class="a" style="left:1545px;top:420px;width:16px;height:330px;background:#f0f0f0;"></div>
<div class="a" style="left:1155px;top:420px;width:390px;height:21px;overflow:hidden"><div class="t" style="left:1.99px;top:2.61px;font-size:12.61px;font-weight:400;color:#fff;transform:scaleX(0.9617)">System.AggregateException: One or more errors occurred. ---&gt; System.InvalidOperationException: Sequence</div></div>
<svg style="left:0;top:0" width="1581" height="799" viewBox="0 0 1581 799"><path d="M1101.20,694.09 A13.4,13.4 0 1 1 1087.09,696.96" fill="none" stroke="#fff" stroke-width="4.2"/><polygon points="1082.6,691.9 1091.6,691.9 1091.6,701" fill="#fff"/><g fill="none" stroke="#fff" stroke-width="1.1"><path d="M1539.2,343.6 H1551.8 V327.8"/><path d="M1539.2,343.6 V341.6"/><path d="M1539.3,324.8 H1549.5 V341.3 H1537.2 V326.8 Z" fill="#33414a"/></g><path d="M1537.2,326.8 L1539.3,324.8 V326.8 Z" fill="#fff"/><g stroke="#fff" stroke-width="1"><line x1="1539.4" y1="330.5" x2="1546.8" y2="330.5"/><line x1="1539.4" y1="335.4" x2="1546.8" y2="335.4"/></g><line x1="1539.4" y1="332.9" x2="1546.8" y2="332.9" stroke="#9a9a9a" stroke-width="1.2"/><polyline points="1549.6,431.2 1552.6,427.2 1555.6,431.2" fill="none" stroke="#bdbdbd" stroke-width="2.2"/><polyline points="1549.6,739.5 1552.6,743.5 1555.6,739.5" fill="none" stroke="#bdbdbd" stroke-width="2.2"/></svg>
</body></html>
